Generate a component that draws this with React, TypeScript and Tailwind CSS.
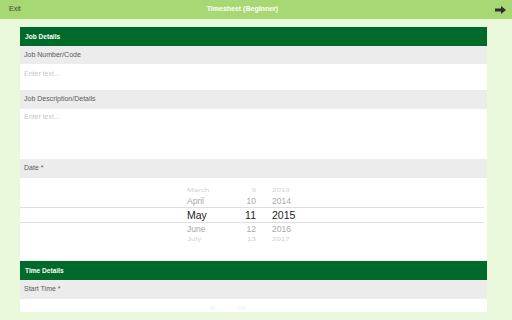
import React from "react";

function ArrowIcon() {
  return (
    <svg width="11" height="8" viewBox="0 0 11 8" className="block">
      <path d="M0 2.5H6V0L11 4L6 8V5.5H0Z" fill="#2f2f2f" />
    </svg>
  );
}

function SectionHeader({ title }: { title: string }) {
  return (
    <div className="h-[19px] flex items-center pl-[5px] bg-[#006a2a] text-white font-bold text-[6.6px]">
      {title}
    </div>
  );
}

function Label({ text, h = "h-[19px]" }: { text: string; h?: string }) {
  return (
    <div className={`${h} flex items-center pl-[4px] bg-[#ececec] text-[#5a5a5a] text-[7px]`}>
      {text}
    </div>
  );
}

const rows = [
  { m: "March", d: "9", y: "2013", cls: "h-[11px] text-[8px] text-[#d2d2d2] scale-y-[0.7]" },
  { m: "April", d: "10", y: "2014", cls: "h-[11px] text-[8.5px] text-[#a9a9a9]" },
];
const rowsAfter = [
  { m: "June", d: "12", y: "2016", cls: "h-[12px] text-[8.5px] text-[#a9a9a9]" },
  { m: "July", d: "13", y: "2017", cls: "h-[10px] text-[8px] text-[#d2d2d2] scale-y-[0.6]" },
];

function PickerRow({ m, d, y, cls }: { m: string; d: string; y: string; cls: string }) {
  return (
    <div className={`flex items-center pl-[167px] leading-none ${cls}`}>
      <span className="w-[50px]">{m}</span>
      <span className="w-[19px] text-right">{d}</span>
      <span className="ml-[16px]">{y}</span>
    </div>
  );
}

export default function App() {
  return (
    <div className="w-[512px] h-[320px] overflow-hidden bg-[#eaf8dc] font-['Liberation_Sans',Arial,sans-serif]">
      <header className="h-[19px] bg-[#a8d873] flex items-center pl-[9px] pr-[6px]">
        <span className="text-[7px] text-[#3c3c3c]">Exit</span>
        <span className="ml-[186px] text-[7px] font-bold text-white">Timesheet (Beginner)</span>
        <span className="ml-auto">
          <ArrowIcon />
        </span>
      </header>

      <div className="mt-[8px] ml-[20px] w-[467px] h-[285px] overflow-hidden">
        <SectionHeader title="Job Details" />
        <Label text="Job Number/Code" h="h-[18px]" />
        <div className="h-[26px] bg-white pl-[4px] pt-[6px] text-[7px] text-[#c8c8c8] leading-[8px]">
          Enter text...
        </div>
        <Label text="Job Description/Details" />
        <div className="h-[50px] bg-white pl-[4px] pt-[4px] text-[7px] text-[#c8c8c8] leading-[8px]">
          Enter text...
        </div>
        <Label text="Date *" />
        <div className="h-[83px] bg-white pt-[7px] border-b border-[#f2f2f2]">
          {rows.map((r) => (
            <PickerRow key={r.m} {...r} />
          ))}
          <div className="h-[16px] mr-[3px] border-y border-[#dedede] flex items-center pl-[167px] text-[10.5px] text-[#222] leading-none">
            <span className="w-[50px]">May</span>
            <span className="w-[19px] text-right">11</span>
            <span className="ml-[16px]">2015</span>
          </div>
          {rowsAfter.map((r) => (
            <PickerRow key={r.m} {...r} />
          ))}
        </div>
        <SectionHeader title="Time Details" />
        <Label text="Start Time *" />
        <div className="h-[40px] bg-white pt-[6px]">
          <div className="flex items-center pl-[190px] text-[8px] text-[#eeeeee] scale-y-[0.6] leading-none">
            <span className="w-[27px]">9</span>
            <span>00</span>
          </div>
        </div>
      </div>
    </div>
  );
}
